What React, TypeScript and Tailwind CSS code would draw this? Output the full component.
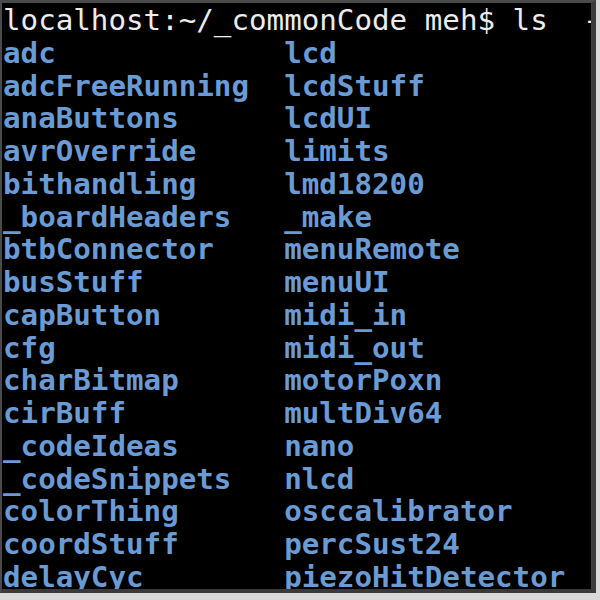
const left = [
  'adc',
  'adcFreeRunning',
  'anaButtons',
  'avrOverride',
  'bithandling',
  '_boardHeaders',
  'btbConnector',
  'busStuff',
  'capButton',
  'cfg',
  'charBitmap',
  'cirBuff',
  '_codeIdeas',
  '_codeSnippets',
  'colorThing',
  'coordStuff',
  'delayCyc',
];

const right = [
  'lcd',
  'lcdStuff',
  'lcdUI',
  'limits',
  'lmd18200',
  '_make',
  'menuRemote',
  'menuUI',
  'midi_in',
  'midi_out',
  'motorPoxn',
  'multDiv64',
  'nano',
  'nlcd',
  'osccalibrator',
  'percSust24',
  'piezoHitDetector',
];

export default function App() {
  return (
    <div className="w-[600px] h-[600px] bg-[#d9d9d9] overflow-hidden">
      <div className="w-[596px] h-[593px] bg-black border-t-[3px] border-l-[2px] border-r-[5px] border-b-[4px] border-t-[#4a4a4a] border-l-[#4a4a4a] border-r-[#3a3a3a] border-b-[#3a3a3a] overflow-hidden">
        <div className="pl-[1px] pt-[1px] font-['DejaVu_Sans_Mono',monospace] text-[29.2px] leading-[32.75px] whitespace-pre">
          <div className="text-[#ececec]">
            localhost:~/_commonCode meh$ ls  -
          </div>
          <div className="grid grid-cols-[16ch_1fr] font-bold text-[#6a9bd4]">
            {left.map((name, i) => (
              <div key={name} className="contents">
                <div>{name}</div>
                <div>{right[i]}</div>
              </div>
            ))}
          </div>
        </div>
      </div>
    </div>
  );
}
